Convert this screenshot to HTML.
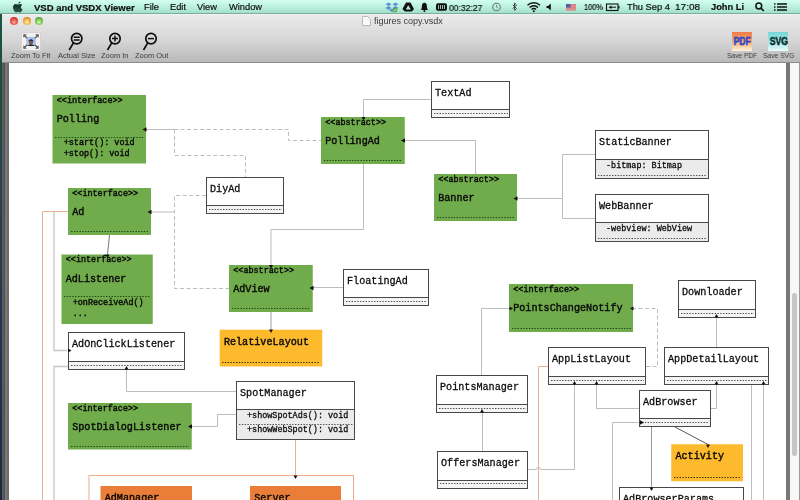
<!DOCTYPE html>
<html><head><meta charset="utf-8"><style>
html,body{margin:0;padding:0}
body{width:800px;height:500px;overflow:hidden;position:relative;background:#fff;font-family:"Liberation Sans",sans-serif}
.abs{position:absolute}
.mi,.lbl,.gs{will-change:transform}
#menubar{left:0;top:0;width:800px;height:14px;background:linear-gradient(#d2fff0,#baf0dc 50%,#a0dcc6)}
#menubar .ln{position:absolute;left:0;top:13px;width:800px;height:1px;background:#7aae9a}
.mi{position:absolute;top:1.5px;font-size:9.3px;line-height:11px;color:#101010;-webkit-text-stroke:0.2px #101010;white-space:nowrap;transform-origin:0 0}
#desk{left:0;top:14px;width:2px;height:486px;background:linear-gradient(#1a5444,#1e4a40 18%,#2a4050 38%,#203050 75%,#1a2a40)}
#win{left:2px;top:14px;width:798px;height:486px;background:#fff}
#toolbar{left:2px;top:14px;width:798px;height:48px;background:linear-gradient(#ebebeb,#d6d6d6 55%,#b9b9b9)}
#tbtop{left:2px;top:14px;width:798px;height:1px;background:#f2f2f2}
#tbline{left:2px;top:62px;width:798px;height:1px;background:#8c8c8c}
.tl{position:absolute;width:8px;height:8px;border-radius:50%;top:17px;box-sizing:border-box}
.lbl{position:absolute;top:51px;font-size:7.5px;line-height:9px;color:#3c3c3c;white-space:nowrap;transform-origin:0 0}
#diagram{left:0;top:0;will-change:transform}
#diagram text{font-family:"Liberation Mono", monospace}
</style></head><body>
<div id="win" class="abs"></div>
<svg id="diagram" class="abs" width="800" height="500" viewBox="0 0 800 500">
<defs><clipPath id="cc"><rect x="9" y="63" width="777" height="437"/></clipPath></defs>
<g clip-path="url(#cc)">
<path d="M146,129.5 H174" fill="none" stroke="#bdbdbd" stroke-width="1"/>
<path d="M174,129.5 H288.5 V140.5 H321" fill="none" stroke="#bdbdbd" stroke-width="1" stroke-dasharray="4,2.5"/>
<path d="M174.5,129.5 V155.5 H245.5 V177" fill="none" stroke="#bdbdbd" stroke-width="1" stroke-dasharray="4,2.5"/>
<path d="M431,99.5 H363.5 V117" fill="none" stroke="#bdbdbd" stroke-width="1"/>
<path d="M475.5,174 V140.5 H405" fill="none" stroke="#bdbdbd" stroke-width="1"/>
<path d="M595,154.5 H562.5 V218.5 H595" fill="none" stroke="#bdbdbd" stroke-width="1"/>
<path d="M562.5,198.5 H517" fill="none" stroke="#bdbdbd" stroke-width="1"/>
<path d="M151,212 H174" fill="none" stroke="#bdbdbd" stroke-width="1"/>
<path d="M206,195.5 H174.5 V288.5 H229" fill="none" stroke="#bdbdbd" stroke-width="1" stroke-dasharray="4,2.5"/>
<path d="M109.5,235 L107.5,254.5" fill="none" stroke="#777" stroke-width="1"/>
<path d="M363.5,164 V229.5 H271 V265" fill="none" stroke="#bdbdbd" stroke-width="1"/>
<path d="M343,287.5 H313" fill="none" stroke="#bdbdbd" stroke-width="1"/>
<path d="M271,312 V329" fill="none" stroke="#a0a0a0" stroke-width="1"/>
<path d="M68,211.5 H42.5 V500" fill="none" stroke="#eab096" stroke-width="1"/>
<path d="M54,211.5 V350.5 H67" fill="none" stroke="#c6c6c6" stroke-width="1.3"/>
<path d="M68,366.5 H54 V500" fill="none" stroke="#c6c6c6" stroke-width="1.3"/>
<path d="M236.5,391.5 H126.5 V370" fill="none" stroke="#bdbdbd" stroke-width="1"/>
<path d="M236.5,414.5 H217.5 V426.5 H192" fill="none" stroke="#bdbdbd" stroke-width="1"/>
<path d="M295.5,440 V475.5" fill="none" stroke="#eab096" stroke-width="1"/>
<rect x="89" y="475.5" width="264.5" height="40" fill="none" stroke="#efac8c" stroke-width="1"/>
<path d="M481.5,375 V308.5 H509" fill="none" stroke="#bdbdbd" stroke-width="1"/>
<path d="M646,366.5 H657.5 V308.5 H634" fill="none" stroke="#bdbdbd" stroke-width="1" stroke-dasharray="4,2.5"/>
<path d="M548,366.5 H538.5 V500" fill="none" stroke="#eab096" stroke-width="1"/>
<path d="M482.5,451 V413" fill="none" stroke="#bdbdbd" stroke-width="1"/>
<path d="M527,469.5 H536.5 A2,2 0 0 1 540.5,469.5 H574.5 V385" fill="none" stroke="#bdbdbd" stroke-width="1"/>
<path d="M639,408.5 H596.5 V385" fill="none" stroke="#bdbdbd" stroke-width="1"/>
<path d="M711,408.5 H716.5 V385" fill="none" stroke="#bdbdbd" stroke-width="1"/>
<path d="M716.5,347.5 V317.5" fill="none" stroke="#bdbdbd" stroke-width="1"/>
<path d="M751.5,385 V500" fill="none" stroke="#bdbdbd" stroke-width="1"/>
<path d="M763.5,385 V500" fill="none" stroke="#bdbdbd" stroke-width="1"/>
<path d="M639,422.5 H612.5 V500" fill="none" stroke="#bdbdbd" stroke-width="1"/>
<path d="M651.5,427 V487.5" fill="none" stroke="#999" stroke-width="1"/>
<path d="M675,427 L708,444.5" fill="none" stroke="#555" stroke-width="1"/>
<rect x="52.5" y="95" width="93.5" height="68.5" fill="#71ac4c"/>
<text x="56.8" y="102.6" font-size="8.45" fill="#0a0a0a" stroke="#0a0a0a" stroke-width="0.4">&lt;&lt;interface&gt;&gt;</text>
<text x="56.7" y="122" font-size="10.15" fill="#0a0a0a" stroke="#0a0a0a" stroke-width="0.4">Polling</text>
<line x1="55" y1="137.5" x2="144" y2="137.5" stroke="#1e4a14" stroke-width="1" stroke-dasharray="1.4,1.4" opacity="1"/>
<text x="63.7" y="144.8" font-size="8.45" fill="#0a0a0a" stroke="#0a0a0a" stroke-width="0.4">+start(): void</text>
<text x="63.7" y="155.5" font-size="8.45" fill="#0a0a0a" stroke="#0a0a0a" stroke-width="0.4">+stop(): void</text>
<rect x="321" y="117" width="83.75" height="47" fill="#71ac4c"/>
<text x="325.3" y="124.6" font-size="8.45" fill="#0a0a0a" stroke="#0a0a0a" stroke-width="0.4">&lt;&lt;abstract&gt;&gt;</text>
<text x="325.2" y="144" font-size="10.15" fill="#0a0a0a" stroke="#0a0a0a" stroke-width="0.4">PollingAd</text>
<line x1="324" y1="160.5" x2="402" y2="160.5" stroke="#1e4a14" stroke-width="1" stroke-dasharray="1.4,1.4" opacity="1"/>
<rect x="434" y="174" width="83" height="47" fill="#71ac4c"/>
<text x="438.3" y="181.6" font-size="8.45" fill="#0a0a0a" stroke="#0a0a0a" stroke-width="0.4">&lt;&lt;abstract&gt;&gt;</text>
<text x="438.2" y="201" font-size="10.15" fill="#0a0a0a" stroke="#0a0a0a" stroke-width="0.4">Banner</text>
<line x1="437" y1="217.5" x2="515" y2="217.5" stroke="#1e4a14" stroke-width="1" stroke-dasharray="1.4,1.4" opacity="1"/>
<rect x="68" y="188" width="83" height="47" fill="#71ac4c"/>
<text x="72.3" y="195.6" font-size="8.45" fill="#0a0a0a" stroke="#0a0a0a" stroke-width="0.4">&lt;&lt;interface&gt;&gt;</text>
<text x="72.2" y="215" font-size="10.15" fill="#0a0a0a" stroke="#0a0a0a" stroke-width="0.4">Ad</text>
<line x1="71" y1="231.5" x2="149" y2="231.5" stroke="#1e4a14" stroke-width="1" stroke-dasharray="1.4,1.4" opacity="1"/>
<rect x="61.5" y="254.5" width="91.25" height="69.5" fill="#71ac4c"/>
<text x="65.8" y="262.1" font-size="8.45" fill="#0a0a0a" stroke="#0a0a0a" stroke-width="0.4">&lt;&lt;interface&gt;&gt;</text>
<text x="65.7" y="281.5" font-size="10.15" fill="#0a0a0a" stroke="#0a0a0a" stroke-width="0.4">AdListener</text>
<line x1="64" y1="296.5" x2="150" y2="296.5" stroke="#1e4a14" stroke-width="1" stroke-dasharray="1.4,1.4" opacity="1"/>
<text x="72.7" y="304.8" font-size="8.45" fill="#0a0a0a" stroke="#0a0a0a" stroke-width="0.4">+onReceiveAd()</text>
<text x="72.7" y="316.1" font-size="8.45" fill="#0a0a0a" stroke="#0a0a0a" stroke-width="0.4">...</text>
<rect x="229" y="265" width="83.75" height="47" fill="#71ac4c"/>
<text x="233.3" y="272.6" font-size="8.45" fill="#0a0a0a" stroke="#0a0a0a" stroke-width="0.4">&lt;&lt;abstract&gt;&gt;</text>
<text x="233.2" y="292" font-size="10.15" fill="#0a0a0a" stroke="#0a0a0a" stroke-width="0.4">AdView</text>
<line x1="232" y1="308.5" x2="310" y2="308.5" stroke="#1e4a14" stroke-width="1" stroke-dasharray="1.4,1.4" opacity="1"/>
<rect x="68" y="403" width="123.75" height="46.5" fill="#71ac4c"/>
<text x="72.3" y="410.6" font-size="8.45" fill="#0a0a0a" stroke="#0a0a0a" stroke-width="0.4">&lt;&lt;interface&gt;&gt;</text>
<text x="72.2" y="430" font-size="10.15" fill="#0a0a0a" stroke="#0a0a0a" stroke-width="0.4">SpotDialogListener</text>
<line x1="71" y1="446.5" x2="189" y2="446.5" stroke="#1e4a14" stroke-width="1" stroke-dasharray="1.4,1.4" opacity="1"/>
<rect x="509" y="284" width="124" height="48" fill="#71ac4c"/>
<text x="513.3" y="291.6" font-size="8.45" fill="#0a0a0a" stroke="#0a0a0a" stroke-width="0.4">&lt;&lt;interface&gt;&gt;</text>
<text x="513.2" y="311" font-size="10.15" fill="#0a0a0a" stroke="#0a0a0a" stroke-width="0.4">PointsChangeNotify</text>
<line x1="512" y1="328.5" x2="631" y2="328.5" stroke="#1e4a14" stroke-width="1" stroke-dasharray="1.4,1.4" opacity="1"/>
<rect x="219.7" y="329.7" width="102.5" height="36.80000000000001" fill="#fdba2c"/>
<text x="223.89999999999998" y="344.7" font-size="10.15" fill="#0a0a0a" stroke="#0a0a0a" stroke-width="0.4">RelativeLayout</text>
<line x1="222" y1="362.5" x2="320" y2="362.5" stroke="#3a2a08" stroke-width="1" stroke-dasharray="1.4,1.4" opacity="1"/>
<rect x="671.25" y="444.25" width="71.75" height="37.0" fill="#fdba2c"/>
<text x="675.45" y="459.25" font-size="10.15" fill="#0a0a0a" stroke="#0a0a0a" stroke-width="0.4">Activity</text>
<line x1="674" y1="477.5" x2="741" y2="477.5" stroke="#3a2a08" stroke-width="1" stroke-dasharray="1.4,1.4" opacity="1"/>
<rect x="100.5" y="486" width="91.5" height="34" fill="#ea7e38"/>
<text x="104.7" y="501" font-size="10.15" fill="#0a0a0a" stroke="#0a0a0a" stroke-width="0.4">AdManager</text>
<rect x="250" y="486" width="91" height="34" fill="#ea7e38"/>
<text x="254.2" y="501" font-size="10.15" fill="#0a0a0a" stroke="#0a0a0a" stroke-width="0.4">Server</text>
<rect x="431.5" y="81.5" width="78" height="36" fill="#fff" stroke="#484848" stroke-width="1"/>
<line x1="431" y1="109.5" x2="510" y2="109.5" stroke="#484848" stroke-width="1"/>
<text x="435" y="95.6" font-size="10.15" fill="#0a0a0a" stroke="#0a0a0a" stroke-width="0.28">TextAd</text>
<rect x="432" y="110" width="77" height="7" fill="#f4f4f4"/>
<line x1="434" y1="113.5" x2="508" y2="113.5" stroke="#505050" stroke-width="1" stroke-dasharray="1.4,1.4" opacity="1"/>
<rect x="206.5" y="177.5" width="77" height="36" fill="#fff" stroke="#484848" stroke-width="1"/>
<line x1="206" y1="205.5" x2="284" y2="205.5" stroke="#484848" stroke-width="1"/>
<text x="210" y="191.6" font-size="10.15" fill="#0a0a0a" stroke="#0a0a0a" stroke-width="0.28">DiyAd</text>
<rect x="207" y="206" width="76" height="7" fill="#f4f4f4"/>
<line x1="209" y1="209.5" x2="282" y2="209.5" stroke="#505050" stroke-width="1" stroke-dasharray="1.4,1.4" opacity="1"/>
<rect x="595.5" y="130.5" width="113" height="48" fill="#fff" stroke="#484848" stroke-width="1"/>
<rect x="596" y="160" width="112" height="18" fill="#ebebeb"/>
<line x1="595" y1="159.5" x2="709" y2="159.5" stroke="#484848" stroke-width="1"/>
<text x="599" y="144.6" font-size="10.15" fill="#0a0a0a" stroke="#0a0a0a" stroke-width="0.28">StaticBanner</text>
<text x="606" y="168.1" font-size="8.45" fill="#0a0a0a" stroke="#0a0a0a" stroke-width="0.28">-bitmap: Bitmap</text>
<line x1="598" y1="175.5" x2="707" y2="175.5" stroke="#505050" stroke-width="1" stroke-dasharray="1.4,1.4" opacity="1"/>
<rect x="595.5" y="194.5" width="113" height="47" fill="#fff" stroke="#484848" stroke-width="1"/>
<rect x="596" y="223" width="112" height="18" fill="#ebebeb"/>
<line x1="595" y1="222.5" x2="709" y2="222.5" stroke="#484848" stroke-width="1"/>
<text x="599" y="208.6" font-size="10.15" fill="#0a0a0a" stroke="#0a0a0a" stroke-width="0.28">WebBanner</text>
<text x="606" y="231.1" font-size="8.45" fill="#0a0a0a" stroke="#0a0a0a" stroke-width="0.28">-webview: WebView</text>
<line x1="598" y1="238.5" x2="707" y2="238.5" stroke="#505050" stroke-width="1" stroke-dasharray="1.4,1.4" opacity="1"/>
<rect x="343.5" y="269.5" width="85" height="36" fill="#fff" stroke="#484848" stroke-width="1"/>
<line x1="343" y1="297.5" x2="429" y2="297.5" stroke="#484848" stroke-width="1"/>
<text x="347" y="283.6" font-size="10.15" fill="#0a0a0a" stroke="#0a0a0a" stroke-width="0.28">FloatingAd</text>
<rect x="344" y="298" width="84" height="7" fill="#f4f4f4"/>
<line x1="346" y1="301.5" x2="427" y2="301.5" stroke="#505050" stroke-width="1" stroke-dasharray="1.4,1.4" opacity="1"/>
<rect x="68.5" y="332.5" width="116" height="37" fill="#fff" stroke="#484848" stroke-width="1"/>
<line x1="68" y1="361.5" x2="185" y2="361.5" stroke="#484848" stroke-width="1"/>
<text x="72" y="346.6" font-size="10.15" fill="#0a0a0a" stroke="#0a0a0a" stroke-width="0.28">AdOnClickListener</text>
<rect x="69" y="362" width="115" height="7" fill="#f4f4f4"/>
<line x1="71" y1="365.5" x2="183" y2="365.5" stroke="#505050" stroke-width="1" stroke-dasharray="1.4,1.4" opacity="1"/>
<rect x="236.5" y="381.5" width="118" height="58" fill="#fff" stroke="#484848" stroke-width="1"/>
<rect x="237" y="410" width="117" height="29" fill="#ebebeb"/>
<line x1="236" y1="409.5" x2="355" y2="409.5" stroke="#484848" stroke-width="1"/>
<text x="240" y="395.6" font-size="10.15" fill="#0a0a0a" stroke="#0a0a0a" stroke-width="0.28">SpotManager</text>
<text x="247" y="418.1" font-size="8.45" fill="#0a0a0a" stroke="#0a0a0a" stroke-width="0.28">+showSpotAds(): void</text>
<text x="247" y="431.90000000000003" font-size="8.45" fill="#0a0a0a" stroke="#0a0a0a" stroke-width="0.28">+showWebSpot(): void</text>
<line x1="239" y1="424.5" x2="353" y2="424.5" stroke="#505050" stroke-width="1" stroke-dasharray="1.4,1.4" opacity="1"/>
<rect x="436.5" y="375.5" width="91" height="37" fill="#fff" stroke="#484848" stroke-width="1"/>
<line x1="436" y1="404.5" x2="528" y2="404.5" stroke="#484848" stroke-width="1"/>
<text x="440" y="389.6" font-size="10.15" fill="#0a0a0a" stroke="#0a0a0a" stroke-width="0.28">PointsManager</text>
<rect x="437" y="405" width="90" height="7" fill="#f4f4f4"/>
<line x1="439" y1="408.5" x2="526" y2="408.5" stroke="#505050" stroke-width="1" stroke-dasharray="1.4,1.4" opacity="1"/>
<rect x="437.5" y="451.5" width="90" height="37" fill="#fff" stroke="#484848" stroke-width="1"/>
<line x1="437" y1="480.5" x2="528" y2="480.5" stroke="#484848" stroke-width="1"/>
<text x="441" y="465.6" font-size="10.15" fill="#0a0a0a" stroke="#0a0a0a" stroke-width="0.28">OffersManager</text>
<rect x="438" y="481" width="89" height="7" fill="#f4f4f4"/>
<line x1="440" y1="483.5" x2="526" y2="483.5" stroke="#505050" stroke-width="1" stroke-dasharray="1.4,1.4" opacity="1"/>
<rect x="548.5" y="347.5" width="97" height="37" fill="#fff" stroke="#484848" stroke-width="1"/>
<line x1="548" y1="376.5" x2="646" y2="376.5" stroke="#484848" stroke-width="1"/>
<text x="552" y="361.6" font-size="10.15" fill="#0a0a0a" stroke="#0a0a0a" stroke-width="0.28">AppListLayout</text>
<rect x="549" y="377" width="96" height="7" fill="#f4f4f4"/>
<line x1="551" y1="380.5" x2="644" y2="380.5" stroke="#505050" stroke-width="1" stroke-dasharray="1.4,1.4" opacity="1"/>
<rect x="678.5" y="280.5" width="77" height="37" fill="#fff" stroke="#484848" stroke-width="1"/>
<line x1="678" y1="309.5" x2="756" y2="309.5" stroke="#484848" stroke-width="1"/>
<text x="682" y="294.6" font-size="10.15" fill="#0a0a0a" stroke="#0a0a0a" stroke-width="0.28">Downloader</text>
<rect x="679" y="310" width="76" height="7" fill="#f4f4f4"/>
<line x1="681" y1="313.5" x2="754" y2="313.5" stroke="#505050" stroke-width="1" stroke-dasharray="1.4,1.4" opacity="1"/>
<rect x="664.5" y="347.5" width="104" height="37" fill="#fff" stroke="#484848" stroke-width="1"/>
<line x1="664" y1="376.5" x2="769" y2="376.5" stroke="#484848" stroke-width="1"/>
<text x="668" y="361.6" font-size="10.15" fill="#0a0a0a" stroke="#0a0a0a" stroke-width="0.28">AppDetailLayout</text>
<rect x="665" y="377" width="103" height="7" fill="#f4f4f4"/>
<line x1="667" y1="380.5" x2="767" y2="380.5" stroke="#505050" stroke-width="1" stroke-dasharray="1.4,1.4" opacity="1"/>
<rect x="639.5" y="390.5" width="71" height="36" fill="#fff" stroke="#484848" stroke-width="1"/>
<line x1="639" y1="418.5" x2="711" y2="418.5" stroke="#484848" stroke-width="1"/>
<text x="643" y="404.6" font-size="10.15" fill="#0a0a0a" stroke="#0a0a0a" stroke-width="0.28">AdBrowser</text>
<rect x="640" y="419" width="70" height="7" fill="#f4f4f4"/>
<line x1="642" y1="422.5" x2="709" y2="422.5" stroke="#505050" stroke-width="1" stroke-dasharray="1.4,1.4" opacity="1"/>
<rect x="619.5" y="487.5" width="124" height="43" fill="#fff" stroke="#484848" stroke-width="1"/>
<line x1="619" y1="520.5" x2="744" y2="520.5" stroke="#484848" stroke-width="1"/>
<text x="623" y="501.6" font-size="10.15" fill="#0a0a0a" stroke="#0a0a0a" stroke-width="0.28">AdBrowserParams</text>
<rect x="620" y="521" width="123" height="9" fill="#f4f4f4"/>
<line x1="622" y1="525.5" x2="742" y2="525.5" stroke="#505050" stroke-width="1" stroke-dasharray="1.4,1.4" opacity="1"/>
<polygon points="142.5,129.5 146.5,127.2 146.5,131.8" fill="#111"/>
<polygon points="363.5,120.5 361.5,117.0 365.5,117.0" fill="#111"/>
<polygon points="401,140.5 405,138.2 405,142.8" fill="#111"/>
<polygon points="513.5,198.5 517.5,196.2 517.5,200.8" fill="#111"/>
<polygon points="147.5,212 151.5,209.7 151.5,214.3" fill="#111"/>
<polygon points="107.5,258 105.5,254.5 109.5,254.5" fill="#111"/>
<polygon points="271,268.5 269,265.0 273,265.0" fill="#111"/>
<polygon points="309.5,288 313.5,285.7 313.5,290.3" fill="#111"/>
<polygon points="271,333 269,329.5 273,329.5" fill="#111"/>
<polygon points="71.5,350.5 68.0,348.5 68.0,352.5" fill="#111"/>
<polygon points="126.5,366 124.5,369.5 128.5,369.5" fill="#111"/>
<polygon points="188,426.5 192,424.2 192,428.8" fill="#111"/>
<polygon points="295.5,479 293.5,475.5 297.5,475.5" fill="#111"/>
<polygon points="513,308.5 509.5,306.5 509.5,310.5" fill="#111"/>
<polygon points="630,308.5 633.5,306.5 633.5,310.5" fill="#111"/>
<polygon points="482,409 480,412.5 484,412.5" fill="#111"/>
<polygon points="574.5,381 572.5,384.5 576.5,384.5" fill="#111"/>
<polygon points="596.5,381 594.5,384.5 598.5,384.5" fill="#111"/>
<polygon points="716.5,381 714.5,384.5 718.5,384.5" fill="#111"/>
<polygon points="716.5,314 714.5,317.5 718.5,317.5" fill="#111"/>
<polygon points="763.5,381 761.5,384.5 765.5,384.5" fill="#111"/>
<polygon points="644,422.5 640,420.2 640,424.8" fill="#111"/>
<polygon points="651.5,491 649.5,487.5 653.5,487.5" fill="#111"/>
<polygon points="708,448 706,444.5 710,444.5" fill="#111"/>
</g>
</svg>
<!-- left border strip -->
<div class="abs" style="left:2px;top:63px;width:7px;height:437px;background:linear-gradient(90deg,#5e5e5e 0,#5a5a5a 2px,#4c4c4c 2px,#4c4c4c 3px,#7a7a7a 3px,#7a7a7a 5px,#6c6c6c 5px,#6c6c6c 7px)"></div>
<!-- scrollbar -->
<div class="abs" style="left:786px;top:63px;width:4px;height:437px;background:#787878"></div>
<div class="abs" style="left:790px;top:63px;width:9px;height:437px;background:#f7f7f7"></div>
<div class="abs" style="left:799px;top:63px;width:1px;height:437px;background:#9a9a9a"></div>
<div class="abs" style="left:792px;top:293px;width:5px;height:163px;border-radius:3px;background:#c6c6c6"></div>

<div id="toolbar" class="abs"></div>
<div id="tbtop" class="abs"></div>
<div id="tbline" class="abs"></div>
<div id="desk" class="abs"></div>
<div class="tl" style="left:10px;background:radial-gradient(circle at 50% 65%,#ffb8b0 0,#f06a60 30%,#d83a32 65%,#8a1a18 100%)"></div>
<div class="tl" style="left:22.5px;background:radial-gradient(circle at 50% 65%,#fff0b0 0,#f8c860 30%,#e09a30 65%,#8a5a10 100%)"></div>
<div class="tl" style="left:35px;background:radial-gradient(circle at 50% 65%,#d0ffb0 0,#98d870 30%,#62b040 65%,#2a6a1a 100%)"></div>
<svg class="abs" style="left:362px;top:16px" width="9" height="10" viewBox="0 0 9 10"><path d="M0.5,0.5 H5.5 L8.5,3.5 V9.5 H0.5 Z" fill="#fafafa" stroke="#b8b8b8" stroke-width="1"/></svg>
<div class="abs gs" style="left:373.5px;top:16px;font-size:9px;line-height:10px;color:#3a3a3a;white-space:nowrap;transform-origin:0 0;transform:scaleX(1.0)">figures copy.vsdx</div>

<!-- toolbar icons -->
<svg class="abs" style="left:21px;top:32px" width="20" height="19" viewBox="0 0 20 19">
<rect x="0.5" y="0.5" width="19" height="18" fill="#f3f2ef" stroke="#d4d4d4"/>
<rect x="5.2" y="4.8" width="9.6" height="9.4" rx="3.5" fill="#aac0ec"/>
<ellipse cx="10" cy="10.4" rx="2" ry="2.6" fill="#7a5a48"/>
<path d="M7.6,10 C7.2,6.2 12.8,6.2 12.4,10 C11.8,8.2 8.2,8.2 7.6,10 Z" fill="#1a1e3a"/>
<path d="M6.5,14 C7.2,12 12.8,12 13.5,14 Z" fill="#22283a"/>
<g stroke="#5a5a5a" stroke-width="1.4" fill="none">
<path d="M3.2,3.2 L6.2,6.2 M16.8,3.2 L13.8,6.2 M3.2,15.8 L6.2,12.8 M16.8,15.8 L13.8,12.8"/>
</g>
<g fill="#5a5a5a">
<path d="M2.3,2.3 H5.8 L2.3,5.8 Z M17.7,2.3 H14.2 L17.7,5.8 Z M2.3,16.7 H5.8 L2.3,13.2 Z M17.7,16.7 H14.2 L17.7,13.2 Z"/>
</g>
</svg>
<svg class="abs" style="left:60px;top:30px" width="110" height="24" viewBox="60 30 110 24">
<g stroke="#0e0e0e" stroke-width="1.7" fill="none">
<circle cx="76.7" cy="38.6" r="5.2"/><path d="M73.6,42.6 L69.2,50"/>
<circle cx="115" cy="38.6" r="5.2"/><path d="M111.9,42.6 L107.5,50"/>
<circle cx="151" cy="38.6" r="5.2"/><path d="M147.9,42.6 L143.5,50"/>
</g>
<g stroke="#0e0e0e" stroke-width="1.5">
<path d="M73.7,37.3 H79.7 M73.7,40.1 H79.7"/>
<path d="M112,38.6 H118 M115,35.6 V41.6"/>
<path d="M148,38.6 H154"/>
</g>
</svg>
<div class="lbl" style="left:11px">Zoom To Fit</div>
<div class="lbl" style="left:57.5px">Actual Size</div>
<div class="lbl" style="left:100.5px">Zoom In</div>
<div class="lbl" style="left:134.5px">Zoom Out</div>
<div class="abs" style="left:731.5px;top:31.5px;width:20px;height:19.5px;background:linear-gradient(#f07c48,#f3a070 45%,#f8d8b0 80%,#fdf4e0)"></div>
<div class="abs" style="left:731.5px;top:35.5px;width:20px;font-size:10.5px;line-height:11px;font-weight:bold;color:#2a48c8;-webkit-text-stroke:0.5px #2a48c8;will-change:transform;text-align:center;transform:scaleX(0.82)">PDF</div>
<div class="abs" style="left:768px;top:31.5px;width:20px;height:19.5px;background:linear-gradient(#78d6d8,#98e4e4 45%,#c8f2f2 80%,#eafcfc)"></div>
<div class="abs" style="left:768px;top:35.5px;width:20px;font-size:10.5px;line-height:11px;font-weight:bold;color:#0c2828;-webkit-text-stroke:0.5px #0c2828;will-change:transform;text-align:center;transform:scaleX(0.82)">SVG</div>
<div class="lbl" style="left:726.5px;transform:scaleX(0.88)">Save PDF</div>
<div class="lbl" style="left:762.5px;transform:scaleX(0.89)">Save SVG</div>

<!-- menubar -->
<div id="menubar" class="abs"><div class="ln"></div>
<svg class="abs" style="left:12px;top:0.5px" width="12" height="12" viewBox="0 0 12 12"><defs><linearGradient id="ag" x1="0" y1="0" x2="0" y2="1"><stop offset="0" stop-color="#0e2a20"/><stop offset="0.45" stop-color="#173a2e"/><stop offset="1" stop-color="#2e5a4a"/></linearGradient></defs><path d="M8.6,0.4 C7.4,0.5 6.4,1.3 6.2,2.6 C7.4,2.6 8.4,1.7 8.6,0.4 Z M6,3.4 C5.2,3.4 4.5,2.9 3.7,2.9 C2.3,3 1,4.2 1,6.1 C1,8.6 2.6,11.4 3.8,11.4 C4.6,11.4 4.9,10.9 6,10.9 C7.1,10.9 7.3,11.4 8.1,11.4 C9,11.4 10.1,9.8 10.6,8.5 C9.4,8 8.8,7 8.9,5.8 C9,4.9 9.5,4.2 10.2,3.7 C9.6,3.1 8.9,2.9 8.3,2.9 C7.4,2.9 6.8,3.4 6,3.4 Z" fill="url(#ag)"/></svg>
<div class="mi" style="left:34px;font-weight:bold;font-size:9.5px">VSD and VSDX Viewer</div>
<div class="mi" style="left:144px">File</div>
<div class="mi" style="left:170px">Edit</div>
<div class="mi" style="left:197px">View</div>
<div class="mi" style="left:228.5px">Window</div>
<div class="mi" style="left:448.5px;font-size:9.5px;transform:scaleX(0.9)">00:32:27</div>
<div class="mi" style="left:584px;font-size:9px;transform:scaleX(0.82)">100%</div>
<div class="mi" style="left:627px">Thu Sep 4</div>
<div class="mi" style="left:675px;transform:scaleX(1.08)">17:08</div>
<div class="mi" style="left:710.5px;font-weight:bold">John Li</div>
<svg class="abs" style="left:380px;top:0" width="420" height="14" viewBox="380 0 420 14">
<!-- dropbox -->
<path d="M388.5,2.5 L391.5,4.3 L388.5,6.1 L385.5,4.3 Z M395.5,2.5 L398.5,4.3 L395.5,6.1 L392.5,4.3 Z M388.5,6.1 L391.5,7.9 L388.5,9.7 L385.5,7.9 Z M395.5,6.1 L398.5,7.9 L395.5,9.7 L392.5,7.9 Z M389,10.3 L392,12 L395,10.3 L392,8.6 Z" fill="#5a90d8"/>
<circle cx="395" cy="10" r="2.4" fill="#58a848"/>
<path d="M393.8,10 L394.8,11 L396.3,9.2" stroke="#fff" stroke-width="0.7" fill="none"/>
<!-- drive -->
<path d="M406,2.5 L410.5,2.5 L414,9 L411.8,11.5 L404.8,11.5 L402.5,9 Z" fill="#111"/>
<path d="M408.2,5.2 L405.8,9.5 L410.8,9.5 Z" fill="#b8eedc"/>
<!-- bell -->
<path d="M420.8,10 C421.5,9 422,8 422,5.6 C422,3.8 423,2.8 424.4,2.8 C425.8,2.8 426.8,3.8 426.8,5.6 C426.8,8 427.3,9 428,10 Z" fill="#111"/>
<circle cx="424.4" cy="11" r="1" fill="#111"/>
<!-- battery meter -->
<rect x="436" y="3.2" width="11" height="7.5" rx="2" fill="#111"/>
<path d="M438.5,5 V9 M440.5,5 V9 M442.5,5 V9 M444.5,5 V9" stroke="#b8eedc" stroke-width="0.8"/>
<!-- clock -->
<circle cx="496.5" cy="7" r="3.8" fill="none" stroke="#6a7a74" stroke-width="1.1"/>
<path d="M496.5,4.8 V7 L498,8.2" stroke="#6a7a74" stroke-width="0.9" fill="none"/>
<!-- bluetooth -->
<path d="M512.8,4.8 L516.5,8.5 L514.6,10.4 V3 L516.5,4.9 L512.8,8.6" stroke="#333" stroke-width="0.9" fill="none"/>
<!-- wifi -->
<path d="M527.5,5.2 A9,9 0 0 1 540,5.2" stroke="#111" stroke-width="1.4" fill="none"/>
<path d="M529.6,7.4 A6,6 0 0 1 538,7.4" stroke="#111" stroke-width="1.4" fill="none"/>
<path d="M531.6,9.5 A3,3 0 0 1 536,9.5" stroke="#111" stroke-width="1.4" fill="none"/>
<circle cx="533.8" cy="11.2" r="1" fill="#111"/>
<!-- speaker -->
<path d="M546.5,6 H548 L550.8,3.6 V10.4 L548,8 H546.5 Z" fill="#111"/>
<!-- flag -->
<rect x="566" y="4" width="10" height="6.5" fill="#d46a6a"/>
<path d="M566,5 H576 M566,6.6 H576 M566,8.2 H576 M566,9.8 H576" stroke="#f0d0d0" stroke-width="0.5"/>
<rect x="566" y="4" width="4.5" height="3.5" fill="#5060a8"/>
<!-- battery -->
<rect x="606.5" y="4" width="11.5" height="6.5" fill="none" stroke="#111" stroke-width="1.1"/>
<rect x="618.2" y="6" width="1.3" height="2.5" fill="#111"/>
<path d="M608.5,7.2 L611.5,5.4 V9 Z" fill="#111"/>
<path d="M611,7.2 H616" stroke="#111" stroke-width="1"/>
<!-- search -->
<circle cx="758.8" cy="6" r="2.9" fill="none" stroke="#111" stroke-width="1.5"/>
<path d="M760.9,8.1 L763.8,11" stroke="#111" stroke-width="1.7"/>
<!-- list -->
<path d="M774,4 H775.5 M774,7 H775.5 M774,10 H775.5 M777,4 H787 M777,7 H787 M777,10 H787" stroke="#111" stroke-width="1.6"/>
</svg>
</div>
</body></html>
